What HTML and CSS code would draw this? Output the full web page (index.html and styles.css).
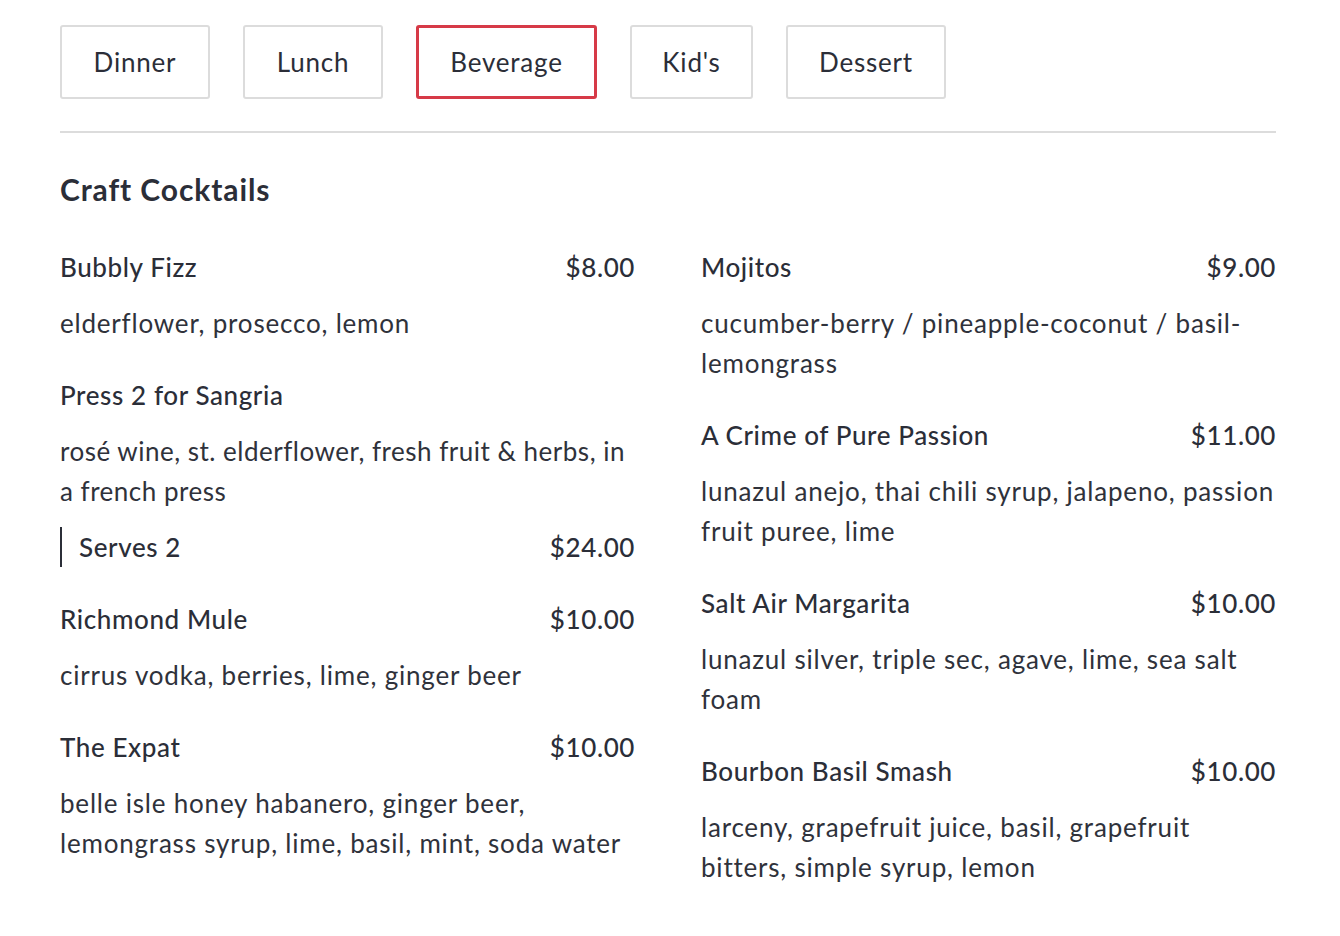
FILE: index.html
```html
<!DOCTYPE html>
<html>
<head>
<meta charset="utf-8">
<link rel="stylesheet" href="styles.css">
</head>
<body>
<div class="page">
  <nav class="tabs">
    <button class="tab tab-dinner">Dinner</button>
    <button class="tab tab-lunch">Lunch</button>
    <button class="tab tab-bev active">Beverage</button>
    <button class="tab tab-kids">Kid's</button>
    <button class="tab tab-dessert">Dessert</button>
  </nav>
  <hr class="divider">
  <h2 class="section-title">Craft Cocktails</h2>
  <div class="columns">
    <div class="col">
      <div class="item">
        <div class="row"><span class="name">Bubbly Fizz</span><span class="price">$8.00</span></div>
        <p class="desc">elderflower, prosecco, lemon</p>
      </div>
      <div class="item">
        <div class="row"><span class="name">Press 2 for Sangria</span></div>
        <p class="desc desc-tight">rosé wine, st. elderflower, fresh fruit &amp; herbs, in a french press</p>
        <div class="row option"><span class="name">Serves 2</span><span class="price">$24.00</span></div>
      </div>
      <div class="item">
        <div class="row"><span class="name">Richmond Mule</span><span class="price">$10.00</span></div>
        <p class="desc">cirrus vodka, berries, lime, ginger beer</p>
      </div>
      <div class="item">
        <div class="row"><span class="name">The Expat</span><span class="price">$10.00</span></div>
        <p class="desc">belle isle honey habanero, ginger beer, lemongrass syrup, lime, basil, mint, soda water</p>
      </div>
    </div>
    <div class="col">
      <div class="item">
        <div class="row"><span class="name">Mojitos</span><span class="price">$9.00</span></div>
        <p class="desc">cucumber-berry / pineapple-coconut / basil-lemongrass</p>
      </div>
      <div class="item">
        <div class="row"><span class="name">A Crime of Pure Passion</span><span class="price">$11.00</span></div>
        <p class="desc">lunazul anejo, thai chili syrup, jalapeno, passion fruit puree, lime</p>
      </div>
      <div class="item">
        <div class="row"><span class="name">Salt Air Margarita</span><span class="price">$10.00</span></div>
        <p class="desc">lunazul silver, triple sec, agave, lime, sea salt foam</p>
      </div>
      <div class="item">
        <div class="row"><span class="name">Bourbon Basil Smash</span><span class="price">$10.00</span></div>
        <p class="desc">larceny, grapefruit juice, basil, grapefruit bitters, simple syrup, lemon</p>
      </div>
    </div>
  </div>
</div>
</body>
</html>
```
FILE: styles.css
```css
* { box-sizing: border-box; }
html, body { margin: 0; padding: 0; background: #fff; }
body {
  font-family: Lato, "Noto Sans", sans-serif;
  color: #2b2e38;
}
.page {
  padding: 25px 64px 0 60px;
}
.tabs {
  display: flex;
  gap: 33px;
}
.tab {
  font-family: inherit;
  font-size: 26px;
  letter-spacing: 0.8px;
  color: #2b2e38;
  background: #fff;
  border: 2px solid #dcdcdc;
  border-radius: 3px;
  height: 74px;
  padding: 0;
  cursor: pointer;
}
.tab-dinner { width: 150px; }
.tab-lunch { width: 140px; }
.tab-bev { width: 181px; }
.tab-kids { width: 123px; }
.tab-dessert { width: 160px; }
.tab.active {
  border: 3px solid #d63a47;
}
.divider {
  margin: 32px 0 0;
  border: 0;
  border-top: 2px solid #dcdcdc;
}
.section-title {
  margin: 36px 0 0;
  font-size: 30px;
  letter-spacing: 0.9px;
  font-weight: 700;
  line-height: 40px;
}
.columns {
  display: grid;
  grid-template-columns: 1fr 1fr;
  column-gap: 66px;
  margin-top: 38px;
}
.item { margin-bottom: 32px; }
.row {
  display: flex;
  justify-content: space-between;
  align-items: center;
  height: 40px;
  font-size: 26px;
  letter-spacing: 0.6px;
  font-weight: 500;
}
.desc {
  margin: 16px 0 0;
  font-size: 26px;
  letter-spacing: 0.8px;
  line-height: 40px;
  color: #2f323b;
}
.desc-tight {
  letter-spacing: 0.5px;
}
.option {
  margin-top: 16px;
  border-left: 2px solid #2b2e38;
  padding-left: 17px;
  height: 40px;
}
```
